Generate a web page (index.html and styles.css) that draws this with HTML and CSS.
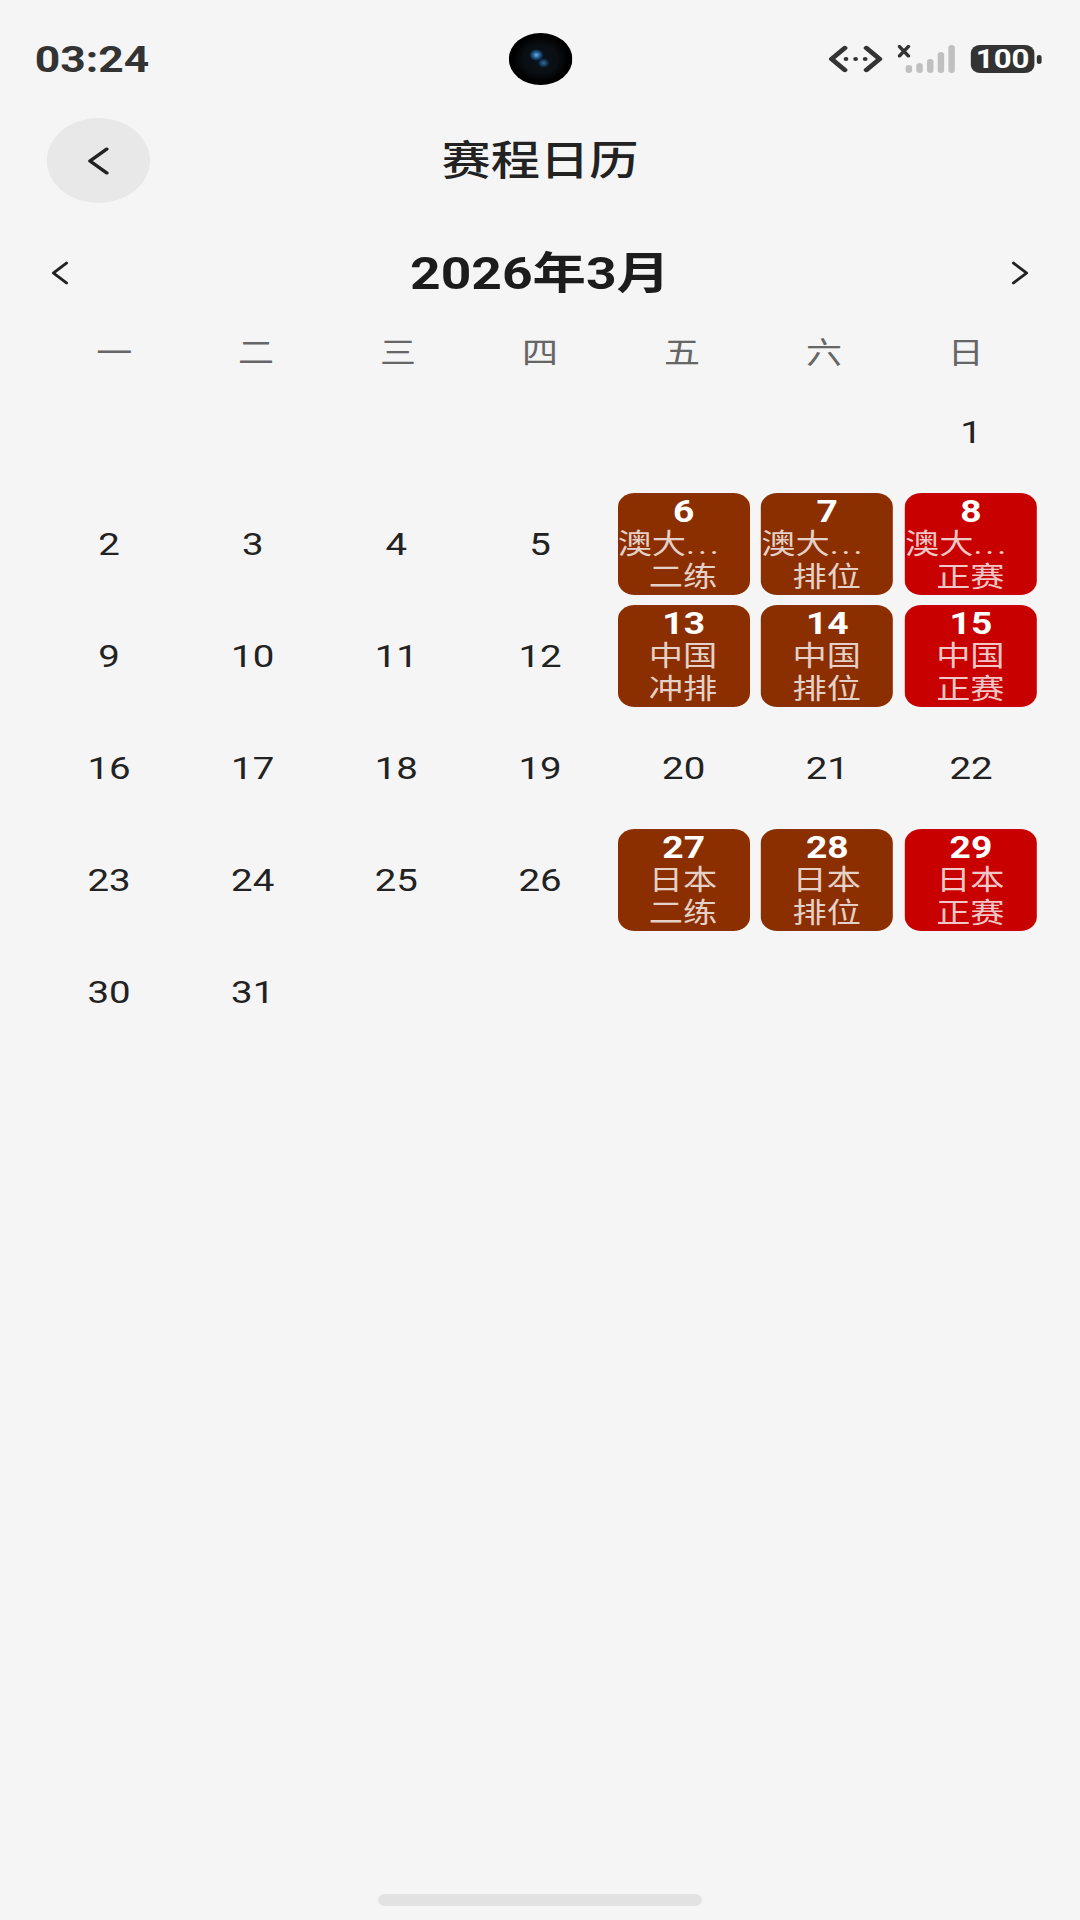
FILE: index.html
```html
<!DOCTYPE html>
<html lang="zh-CN">
<head>
  <meta charset="UTF-8" />
  <meta name="viewport" content="width=device-width, initial-scale=1.0"/>
  <title>赛程日历</title>
  <link rel="stylesheet" href="styles.css">
</head>
<body>
  <div class="screen">
    <div class="status-bar">
      <span class="time">03:24</span>
      <span class="camera"></span>
      <div class="status-icons">
        <svg class="icon-code" width="46" height="28" viewBox="0 0 46 28">
          <path d="M14 3 L3 14 L14 25 M32 3 L43 14 L32 25" fill="none" stroke="#333" stroke-width="4.4" stroke-linecap="round" stroke-linejoin="round"/>
          <circle cx="15" cy="14" r="2" fill="#333"/>
          <circle cx="23" cy="14" r="2" fill="#333"/>
          <circle cx="31" cy="14" r="2" fill="#333"/>
        </svg>
        <svg class="icon-signal" width="48" height="28" viewBox="0 0 48 28">
          <path d="M1.5 1.5 L9 11 M9 1.5 L1.5 11" fill="none" stroke="#333" stroke-width="3" stroke-linecap="round"/>
          <rect x="6.7" y="20" width="5.4" height="8" rx="2.7" fill="#c0c0c0"/>
          <rect x="15.6" y="18" width="5.4" height="10" rx="2.7" fill="#c0c0c0"/>
          <rect x="24.5" y="14" width="5.4" height="14" rx="2.7" fill="#c0c0c0"/>
          <rect x="33.4" y="7" width="5.4" height="21" rx="2.7" fill="#c0c0c0"/>
          <rect x="42.3" y="0" width="5.4" height="28" rx="2.7" fill="#c0c0c0"/>
        </svg>
        <div class="battery">
          <span class="battery-level">100</span>
          <span class="battery-nub"></span>
        </div>
      </div>
    </div>

    <div class="page-header">
      <button class="back-btn" type="button">
        <svg width="18" height="28" viewBox="0 0 18 28">
          <path d="M16 2 L2 14 L16 26" fill="none" stroke="#222" stroke-width="3" stroke-linecap="round" stroke-linejoin="round"/>
        </svg>
      </button>
      <h1 class="page-title">赛程日历</h1>
    </div>

    <div class="month-nav">
      <svg width="14" height="24" viewBox="0 0 14 24">
        <path d="M12.5 2 L1.5 12 L12.5 22" fill="none" stroke="#222" stroke-width="2.6" stroke-linecap="round" stroke-linejoin="round"/>
      </svg>
      <h2 class="month-title">2026年3月</h2>
      <svg width="14" height="24" viewBox="0 0 14 24">
        <path d="M1.5 2 L12.5 12 L1.5 22" fill="none" stroke="#222" stroke-width="2.6" stroke-linecap="round" stroke-linejoin="round"/>
      </svg>
    </div>

    <div class="weekdays">
      <span>一</span><span>二</span><span>三</span><span>四</span><span>五</span><span>六</span><span>日</span>
    </div>

    <div class="days">
      <div class="day first">1</div>
      <div class="day">2</div>
      <div class="day">3</div>
      <div class="day">4</div>
      <div class="day">5</div>
      <div class="race practice"><b>6</b><span class="clip">澳大<i>...</i></span><span>二练</span></div>
      <div class="race practice"><b>7</b><span class="clip">澳大<i>...</i></span><span>排位</span></div>
      <div class="race main"><b>8</b><span class="clip">澳大<i>...</i></span><span>正赛</span></div>
      <div class="day">9</div>
      <div class="day">10</div>
      <div class="day">11</div>
      <div class="day">12</div>
      <div class="race practice"><b>13</b><span>中国</span><span>冲排</span></div>
      <div class="race practice"><b>14</b><span>中国</span><span>排位</span></div>
      <div class="race main"><b>15</b><span>中国</span><span>正赛</span></div>
      <div class="day">16</div>
      <div class="day">17</div>
      <div class="day">18</div>
      <div class="day">19</div>
      <div class="day">20</div>
      <div class="day">21</div>
      <div class="day">22</div>
      <div class="day">23</div>
      <div class="day">24</div>
      <div class="day">25</div>
      <div class="day">26</div>
      <div class="race practice"><b>27</b><span>日本</span><span>二练</span></div>
      <div class="race practice"><b>28</b><span>日本</span><span>排位</span></div>
      <div class="race main"><b>29</b><span>日本</span><span>正赛</span></div>
      <div class="day">30</div>
      <div class="day">31</div>
    </div>

    <div class="home-bar"></div>
  </div>
</body>
</html>
```

FILE: styles.css
```css
html, body {
  margin: 0;
  padding: 0;
  background: #f5f5f5;
  overflow: hidden;
}

/* the whole screen is wider than tall in the shot, so lay out at 900 and stretch */
.screen {
  width: 900px;
  height: 1920px;
  display: flex;
  flex-direction: column;
  font-family: Roboto, "Noto Sans CJK SC", sans-serif;
  color: #222;
  transform: scaleX(1.2);
  transform-origin: left top;
}

.status-bar {
  display: grid;
  grid-template-columns: 1fr auto 1fr;
  align-items: center;
  padding: 33px 29px 0;
}

.time {
  font-size: 37px;
  font-weight: 700;
  color: #333;
}

.camera {
  width: 53px;
  height: 52px;
  border-radius: 50%;
  background:
    radial-gradient(circle at 23px 22px, #6fb0e0 0, #1f5c92 3px, rgba(16, 50, 80, 0) 6px),
    radial-gradient(circle at 29px 30px, #2a6ea8 0, rgba(20, 60, 95, 0) 5px),
    radial-gradient(circle at 50% 50%, #07111b 0, #0b0f13 38%, #000 62%);
}

.status-icons {
  display: flex;
  align-items: center;
  justify-content: flex-end;
  margin-right: 3px;
}

.icon-code {
  margin-right: 12px;
}

.icon-signal {
  margin-right: 13px;
}

.battery {
  display: flex;
  align-items: center;
  gap: 2px;
}

.battery-level {
  width: 53px;
  height: 28px;
  line-height: 28px;
  border-radius: 8px;
  background: #333;
  color: #fff;
  font-size: 26px;
  font-weight: 700;
  text-align: center;
}

.battery-nub {
  width: 4px;
  height: 9px;
  border-radius: 2px;
  background: #333;
}

.page-header {
  display: grid;
  grid-template-columns: 1fr auto 1fr;
  align-items: center;
  margin-top: 33px;
  padding: 0 39px;
}

.back-btn {
  width: 86px;
  height: 85px;
  padding: 0;
  border: none;
  border-radius: 50%;
  background: #e8e8e8;
  display: flex;
  align-items: center;
  justify-content: center;
}

.page-title {
  margin: 0;
  padding-bottom: 8px;
  font-size: 41px;
  font-weight: 500;
  color: #222;
}

.month-nav {
  display: flex;
  align-items: center;
  justify-content: space-between;
  height: 50px;
  margin-top: 45px;
  padding: 0 43px;
}

.month-title {
  margin: 0;
  padding-bottom: 8px;
  font-size: 44.5px;
  font-weight: 700;
  color: #1c1c1c;
}

.weekdays {
  display: grid;
  grid-template-columns: repeat(7, 1fr);
  height: 40px;
  margin-top: 35px;
  padding: 0 36px;
  font-size: 30px;
  line-height: 40px;
  text-align: center;
  color: #666;
}

.days {
  display: grid;
  grid-template-columns: repeat(7, 1fr);
  grid-auto-rows: 102px;
  row-gap: 10px;
  margin-top: 8px;
  padding: 0 31px;
}

.day {
  display: flex;
  align-items: center;
  justify-content: center;
  font-size: 32px;
  color: #222;
}

.first {
  grid-column: 7;
}

.race {
  width: 110px;
  justify-self: center;
  display: flex;
  flex-direction: column;
  align-items: center;
  justify-content: center;
  padding-top: 2px;
  box-sizing: border-box;
  border-radius: 14px;
  font-size: 28.5px;
  line-height: 33px;
  white-space: nowrap;
  color: rgba(255, 255, 255, 0.78);
}

.race span {
  padding-right: 1px;
}

.race b {
  font-size: 31px;
  line-height: 32px;
  color: #fff;
}

.race .clip {
  align-self: flex-start;
}

.clip i {
  font-style: normal;
  letter-spacing: 2.4px;
}

.practice {
  background: #8b2e00;
}

.main {
  background: #c80000;
}

.home-bar {
  width: 270px;
  height: 12px;
  margin: auto auto 14px;
  border-radius: 6px;
  background: #e2e2e2;
}
```
